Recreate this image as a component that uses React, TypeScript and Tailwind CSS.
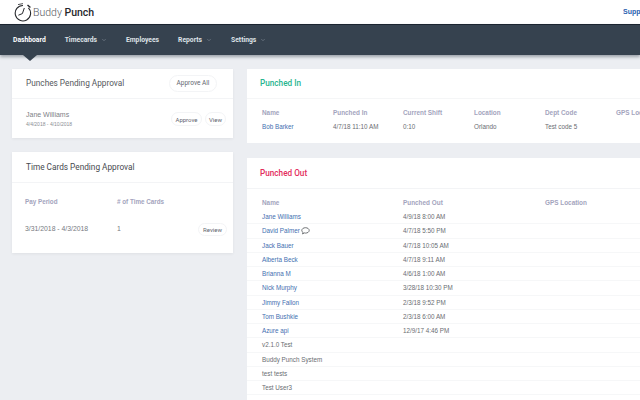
import React from "react";
import { ChevronDown } from "lucide-react";

const roboto = "font-['Roboto','Liberation_Sans',sans-serif]";
const arial = "font-['Liberation_Sans',Arial,sans-serif]";

function NavItem({ label, active, menu }: { label: string; active?: boolean; menu?: boolean }) {
  return (
    <div className={`relative flex h-full items-center gap-[4px] text-[6.75px] font-bold ${active ? "text-white" : "text-[#dfe3e8]"}`}>
      <span>{label}</span>
      {menu && <ChevronDown size={6} strokeWidth={1.5} className="text-[#a9b2bc]" />}
      {active && (
        <div className="absolute bottom-[-6px] left-[10px] h-0 w-0 border-x-[7px] border-t-[6px] border-x-transparent border-t-[#36424f]" />
      )}
    </div>
  );
}

function Pill({ label, cls }: { label: string; cls: string }) {
  return (
    <div className={`flex items-center justify-center rounded-full border border-[#f3f4f6] bg-white text-[#5f6670] ${cls}`}>
      {label}
    </div>
  );
}

function Logo() {
  return (
    <svg width="21" height="20" viewBox="0 0 21 20" fill="none" stroke="#26282c" className="shrink-0">
      <path d="M11 3.5 A7.7 7.7 0 1 0 16.4 5.8" strokeWidth="1.1" />
      <path d="M12.3 6 L10.4 11.6 L6.4 13.2" strokeWidth="1" />
      <path d="M15.5 3 L18.4 5.6" strokeWidth="1.4" />
      <path d="M6 2.6 L11 1.6" strokeWidth="0.8" />
    </svg>
  );
}

const outRows: [string, string][] = [
  ["Jane Williams", "4/9/18 8:00 AM"],
  ["David Palmer", "4/7/18 5:50 PM"],
  ["Jack Bauer", "4/7/18 10:05 AM"],
  ["Alberta Beck", "4/7/18 9:11 AM"],
  ["Brianna M", "4/6/18 1:00 AM"],
  ["Nick Murphy", "3/28/18 10:30 PM"],
  ["Jimmy Fallon", "2/3/18 9:52 PM"],
  ["Tom Bushkie", "2/3/18 6:00 AM"],
  ["Azure api", "12/9/17 4:46 PM"],
  ["v2.1.0 Test", ""],
  ["Buddy Punch System", ""],
  ["test tests", ""],
  ["Test User3", ""],
];

const inHead = ["Name", "Punched In", "Current Shift", "Location", "Dept Code", "GPS Location"];
const inRow = ["Bob Barker", "4/7/18 11:10 AM", "0:10", "Orlando", "Test code 5", ""];

export default function App() {
  return (
    <div className={`flex h-[400px] w-[640px] flex-col overflow-hidden bg-[#eceef2] ${arial}`}>
      <header className="flex h-[24px] shrink-0 items-center justify-between bg-white pl-[12px]">
        <div className="flex items-center">
          <Logo />
          <span className={`mt-[2px] text-[10.5px] text-[#55585c] ${roboto}`}>
            <span className="font-light">Buddy</span> <span className="font-medium text-[#26282c]">Punch</span>
          </span>
        </div>
        <span className="w-[17px] overflow-hidden whitespace-nowrap text-[7px] font-bold text-[#2a62b0]">Support</span>
      </header>

      <nav className={`z-10 flex h-[31px] shrink-0 items-center gap-[19px] border-t border-[#1b2430] bg-[#36424f] pl-[13px] shadow-[0_2px_3px_rgba(60,70,85,0.45)] ${roboto}`}>
        <NavItem label="Dashboard" active />
        <NavItem label="Timecards" menu />
        <NavItem label="Employees" />
        <NavItem label="Reports" menu />
        <NavItem label="Settings" menu />
      </nav>

      <main className="flex min-h-0 flex-1 gap-[14px] pl-[12px] pt-[14px]">
        <div className="flex w-[221px] shrink-0 flex-col gap-[14px]">
          <section className="h-[69px] bg-white shadow-[0_1px_3px_rgba(0,0,0,0.06)]">
            <div className={`flex h-[30px] items-center justify-between border-b border-[#f3f4f6] pl-[14px] pr-[16px] ${roboto}`}>
              <h2 className="text-[8.25px] font-normal text-[#55585d]">Punches Pending Approval</h2>
              <Pill label="Approve All" cls="h-[17px] w-[48px] text-[6.5px]" />
            </div>
            <div className="flex h-[39px] items-center justify-between pl-[14px] pr-[7px]">
              <div className="mt-[1px]">
                <div className="text-[7px] leading-[10px] text-[#7d8186]">Jane Williams</div>
                <div className="mt-[1px] text-[5px] leading-[7px] text-[#8a8e94]">4/4/2018 - 4/10/2018</div>
              </div>
              <div className={`mt-[1px] flex gap-[3px] ${roboto}`}>
                <Pill label="Approve" cls="h-[14px] w-[31px] text-[6px]" />
                <Pill label="View" cls="h-[14px] w-[21px] text-[6px]" />
              </div>
            </div>
          </section>

          <section className="h-[101px] bg-white shadow-[0_1px_3px_rgba(0,0,0,0.06)]">
            <div className={`flex h-[31px] items-center border-b border-[#f3f4f6] pl-[14px] pt-[1px] ${roboto}`}>
              <h2 className="text-[8.25px] font-normal text-[#46494e]">Time Cards Pending Approval</h2>
            </div>
            <div className="grid grid-cols-[92px_1fr] pl-[13px] pt-[14px] text-[6.3px] font-bold leading-[9px] text-[#a3a4bd]">
              <span>Pay Period</span>
              <span># of Time Cards</span>
            </div>
            <div className="mt-[17px] grid grid-cols-[92px_1fr_auto] items-center pl-[13px] pr-[6px] text-[6.85px] text-[#777a7f]">
              <span>3/31/2018 - 4/3/2018</span>
              <span>1</span>
              <Pill label="Review" cls={`h-[13px] w-[29px] text-[6px] ${roboto}`} />
            </div>
          </section>
        </div>

        <div className="flex min-w-0 flex-1 flex-col gap-[15px]">
          <section className="h-[74px] shrink-0 bg-white">
            <div className={`flex h-[30px] items-center border-b border-[#f5f6f7] pl-[13px] ${roboto}`}>
              <h2 className="text-[8.2px] font-medium text-[#27b58f]">Punched In</h2>
            </div>
            <div className="grid grid-cols-[71px_70px_71px_71px_71px_71px] pl-[15px] pt-[9px] text-[6.4px] font-bold leading-[9px] text-[#a3a4bd] whitespace-nowrap">
              {inHead.map((h) => <span key={h}>{h}</span>)}
            </div>
            <div className="grid grid-cols-[71px_70px_71px_71px_71px_71px] pl-[15px] pt-[5px] text-[6.3px] leading-[9px] text-[#6a6d72] whitespace-nowrap">
              {inRow.map((c, i) => <span key={i} className={i === 0 ? "text-[#3f6fb0]" : ""}>{c}</span>)}
            </div>
          </section>

          <section className="flex-1 bg-white">
            <div className={`flex h-[31px] items-center border-b border-[#f3f4f6] pl-[13px] ${roboto}`}>
              <h2 className="text-[8.2px] font-medium text-[#e32b5c]">Punched Out</h2>
            </div>
            <div className="grid h-[21px] grid-cols-[141px_142px_1fr] items-end pb-[3px] pl-[15px] text-[6.4px] font-bold leading-[9px] text-[#a3a4bd]">
              <span>Name</span>
              <span>Punched Out</span>
              <span>GPS Location</span>
            </div>
            {outRows.map(([name, time], i) => (
              <div key={name} className="grid h-[14.25px] grid-cols-[141px_1fr] items-center border-b border-[#f6f7f8] pl-[15px] text-[6.3px] leading-[9px] text-[#6a6d72]">
                <span className={`flex items-center gap-[1px] ${i < 9 ? "text-[#3f6fb0]" : ""}`}>
                  {name}
                  {name === "David Palmer" && (
                    <svg width="9" height="8" viewBox="0 0 9 8" fill="none" stroke="#3a3d42" strokeWidth="0.7">
                      <path d="M4.5 0.7C6.6 0.7 8.2 1.9 8.2 3.4C8.2 4.9 6.6 6.1 4.5 6.1C4 6.1 3.6 6 3.2 5.9L1.6 7L1.9 5.2C1.2 4.7 0.8 4.1 0.8 3.4C0.8 1.9 2.4 0.7 4.5 0.7Z" />
                    </svg>
                  )}
                </span>
                <span>{time}</span>
              </div>
            ))}
          </section>
        </div>
      </main>
    </div>
  );
}
